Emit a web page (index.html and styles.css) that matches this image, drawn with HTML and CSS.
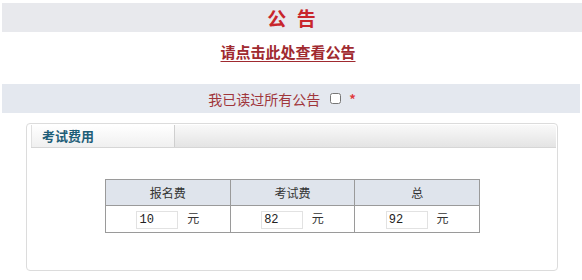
FILE: index.html
```html
<!DOCTYPE html>
<html>
<head>
	<meta http-equiv="Content-Type" content="text/html;charset=UTF-8">
	<title>公告</title>
	<link rel="stylesheet" href="styles.css">
</head>
<body>
	<div class="bar title-bar">公 告</div>
	<div class="link-row"><a href="#">请点击此处查看公告</a></div>
	<div class="bar agree-bar">
		<label>我已读过所有公告 <input type="checkbox" class="chk" /></label>
		<span class="star">*</span>
	</div>
	<div class="panel">
		<div class="panel-head">
			<div class="tab">考试费用</div>
		</div>
		<table class="fee">
			<tr>
				<th>报名费</th>
				<th>考试费</th>
				<th>总</th>
			</tr>
			<tr>
				<td><input type="text" class="num" value="10" /> 元</td>
				<td><input type="text" class="num" value="82" /> 元</td>
				<td><input type="text" class="num" value="92" /> 元</td>
			</tr>
		</table>
	</div>
</body>
</html>
```

FILE: styles.css
```css
*{ margin: 0; padding: 0; }
body{ font: 13px "Noto Sans CJK SC", "Liberation Sans", sans-serif; color: #333; background: #fff; }
.bar{ margin: 0 0 0 2px; text-align: center; }
.title-bar{ margin-top: 3px; height: 29px; line-height: 29px; background: #e8e9ed; color: #c8262c; font-size: 19px; font-weight: bold; letter-spacing: 3px; padding-left: 2px; }
.link-row{ height: 52px; text-align: center; line-height: 40px; padding-right: 6px; }
.link-row a{ color: #a02a30; font-size: 15px; font-weight: bold; text-decoration: underline; text-underline-offset: 3px; }
.agree-bar{ margin-right: 2px; height: 29px; background: #e4e8ef; display: flex; justify-content: center; align-items: center; gap: 8px; color: #a0363b; font-size: 14px; padding-right: 18px; }
.agree-bar label{ display: flex; align-items: center; gap: 6px; }
.chk{ width: 11px; height: 11px; margin-left: 4px; accent-color: #888; }
.star{ color: #e03c3c; font-size: 13px; font-weight: bold; }
.panel{ margin: 10px 24px 0 26px; height: 146px; border: 1px solid #dcdcdc; border-radius: 4px; }
.panel-head{ height: 22px; margin: 1px 1px 0 4px; background: linear-gradient(#f9f9f9, #e4e4e4); border-bottom: 1px solid #d6d6d6; border-radius: 0 3px 0 0; }
.tab{ width: 132px; height: 22px; line-height: 22px; padding-left: 10px; background: linear-gradient(#ffffff, #f0f0f0); border-right: 1px solid #cfcfcf; border-left: 1px solid #e0e0e0; color: #1e5e78; font-weight: bold; font-size: 13px; }
.fee{ margin: 31px 0 0 78px; width: 375px; border-collapse: collapse; border: 1px solid #9a9a9a; font-size: 12px; }
.fee th{ height: 25px; background: #dfe4ec; border: 1px solid #9a9a9a; font-weight: normal; color: #333; }
.fee td{ height: 26px; border: 1px solid #9a9a9a; text-align: center; color: #333; }
.num{ width: 36px; height: 16px; padding: 0 2px; border: 1px solid #e2e2e2; font: 12px "Liberation Mono", monospace; color: #222; margin-right: 6px; vertical-align: middle; }
```
